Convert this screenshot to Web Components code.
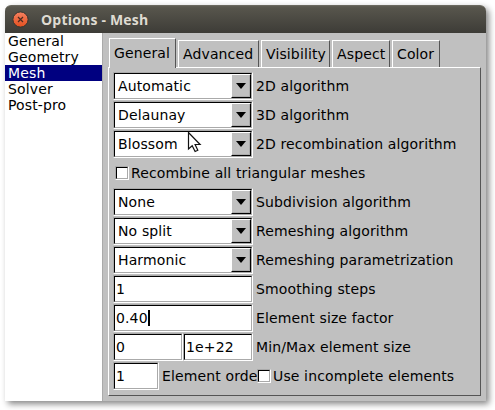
<!DOCTYPE html>
<html lang="en"><head><meta charset="utf-8"><title>Options - Mesh</title>
<style>
html,body{margin:0;background:#fff;width:495px;height:410px;overflow:hidden}
body{font:14px/16px "DejaVu Sans",sans-serif;letter-spacing:.13px;color:#000;padding:5px 0 0 5px;box-sizing:border-box}
</style></head><body>
<mesh-window></mesh-window>
<script>
const define=(name,css,html)=>customElements.define(name,class extends HTMLElement{
  constructor(){super();const t=document.createElement('template');t.innerHTML=`<style>*{box-sizing:border-box}${css}</style>${html}`;
    this.attachShadow({mode:'open'}).append(t.content.cloneNode(true));}
});
const bevel='border:1px solid;border-color:#aaa #fff #fff #aaa;';
define('title-bar',`:host{display:flex;align-items:center;height:28px;padding-left:7px;gap:12px;box-sizing:border-box;border-radius:6px 6px 0 0;background:linear-gradient(#5f5d54 0,#57554c 2px,#3d3c37 100%);border-top:1px solid #6b695f;color:#dfdbd2;font:bold 14px/20px "Open Sans","Noto Sans",sans-serif;letter-spacing:.2px}svg{display:block}`,
`<svg width="17" height="17" viewBox="0 0 17 17"><defs><linearGradient id="g" x2="0" y2="1"><stop stop-color="#f58161"/><stop offset="1" stop-color="#e4501f"/></linearGradient></defs><circle cx="8.5" cy="8.5" r="7.6" fill="url(#g)" stroke="#38352f"/><path d="M6 6l5 5M11 6l-5 5" stroke="#4b2b20" stroke-width="1.2"/></svg><span><slot></slot></span>`);
define('list-item',`:host{display:block;height:16px;line-height:16px;padding-left:3px}:host([selected]){background:#000080;color:#fff}`,`<slot></slot>`);
define('side-list',`:host{display:block;width:98px;box-sizing:border-box;background:#fff;border-right:1px solid #aaa}`,`<slot></slot>`);
define('tab-label',`:host{display:block;box-sizing:border-box;height:27px;border:1px solid #fff;border-right-color:#555;border-bottom:0;padding:5px 0 0 4px;line-height:17px;white-space:nowrap}:host([selected]){height:30px;padding-top:6px;margin-bottom:-1px;background:#c0c0c0;z-index:1;position:relative}`,`<slot></slot>`);
define('text-field',`:host{display:block;box-sizing:border-box;height:28px;${bevel}flex:none}div{display:flex;align-items:center;height:26px;border:1px solid;border-color:#000 #aaa #aaa #000;background:#fff;padding:0 0 0 1px}i{display:none;width:2px;height:16px;background:#000}:host([caret]) i{display:block}`,`<div><slot></slot><i></i></div>`);
define('drop-down',`:host{display:block;box-sizing:border-box;width:140px;height:28px;${bevel}flex:none}div{display:flex;align-items:center;height:26px;border:1px solid;border-color:#000 #aaa #aaa #000;background:#fff;padding-left:3px}span{flex:1}b{display:flex;align-items:center;justify-content:center;width:20px;height:24px;background:#c0c0c0;border:1px solid;border-color:#fff #000 #000 #fff;box-shadow:inset -1px -1px #aaa}`,`<div><span><slot></slot></span><b><svg width="12" height="6"><path d="M1 0h10L6 6z"/></svg></b></div>`);
define('check-box',`:host{display:flex;align-items:center;gap:2px;white-space:nowrap}i{width:14px;height:14px;${bevel}}i:before{content:"";display:block;width:12px;height:12px;border:1px solid;border-color:#000 #aaa #aaa #000;background:#fff;box-sizing:border-box}`,`<i></i><span><slot></slot></span>`);
define('form-row',`:host{display:flex;align-items:center;height:29px;gap:3px;white-space:nowrap}`,`<slot></slot>`);
define('mouse-pointer',`:host{position:absolute;left:187px;top:131px}svg{display:block}`,`<svg width="16" height="23"><path d="M1.5 1.5v16.5l3.7-3.3 2.9 5.8 2.7-1.2-2.7-5.8h5z" fill="#fff" stroke="#111" stroke-width="1.2"/></svg>`);
define('mesh-window',`:host{display:block;width:481px;height:396px;border-radius:6px 6px 0 0;box-shadow:3px 3px 6px rgba(0,0,0,.48)}
.body{display:flex;height:368px;background:#c0c0c0}
main{padding:5px 0 0 5px}.tabs{display:flex;align-items:flex-end;height:29px;padding-left:1px;gap:2px}
.panel{width:373px;height:329px;border:1px solid #fff;border-right-color:#555;border-bottom-color:#555;padding:3px 0 0 4px}`,
`<title-bar>Options - Mesh</title-bar><div class="body"><side-list><list-item>General</list-item><list-item>Geometry</list-item><list-item selected>Mesh</list-item><list-item>Solver</list-item><list-item>Post-pro</list-item></side-list>
<main><div class="tabs"><tab-label selected style="width:67px">General</tab-label><tab-label style="width:81px">Advanced</tab-label><tab-label style="width:69px">Visibility</tab-label><tab-label style="width:58px">Aspect</tab-label><tab-label style="width:48px">Color</tab-label></div>
<div class="panel">
<form-row><drop-down>Automatic</drop-down><span>2D algorithm</span></form-row>
<form-row><drop-down>Delaunay</drop-down><span>3D algorithm</span></form-row>
<form-row><drop-down>Blossom</drop-down><span>2D recombination algorithm</span></form-row>
<form-row style="padding-left:2px"><check-box>Recombine all triangular meshes</check-box></form-row>
<form-row><drop-down>None</drop-down><span>Subdivision algorithm</span></form-row>
<form-row><drop-down>No split</drop-down><span>Remeshing algorithm</span></form-row>
<form-row><drop-down>Harmonic</drop-down><span>Remeshing parametrization</span></form-row>
<form-row><text-field style="width:140px">1</text-field><span>Smoothing steps</span></form-row>
<form-row><text-field style="width:140px" caret>0.40</text-field><span>Element size factor</span></form-row>
<form-row><text-field style="width:70px">0</text-field><text-field style="width:70px;margin-left:-3px">1e+22</text-field><span>Min/Max element size</span></form-row>
<form-row><text-field style="width:46px">1</text-field><span style="width:95px">Element orde</span><check-box style="margin-left:-3px">Use incomplete elements</check-box></form-row>
</div></main></div><mouse-pointer></mouse-pointer>`);
</script></body></html>
